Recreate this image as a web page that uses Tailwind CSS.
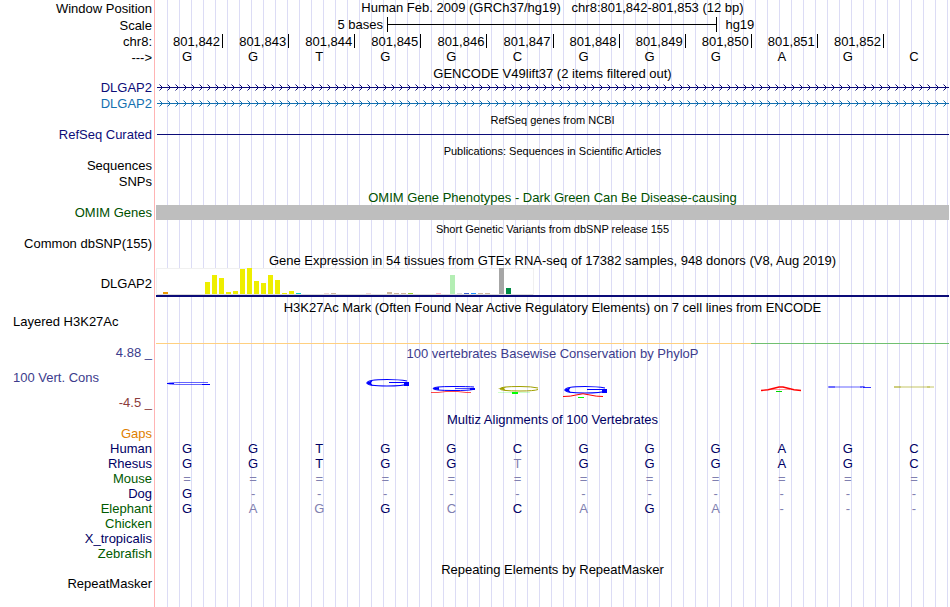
<!DOCTYPE html>
<html lang="en">
<head>
    <meta charset="UTF-8">
    <meta name="viewport" content="width=device-width, initial-scale=1.0">
    <title>Human chr8:801,842-801,853 - Genome Browser</title>
    <script src="https://cdn.jsdelivr.net/npm/@tailwindcss/browser@4"></script>
</head>
<body class="bg-white">
<!-- Page background carries the red divider and the vertical guide lines -->
<main class="min-h-screen pr-px overflow-hidden text-[13px] leading-[18px] text-black font-['Liberation_Sans',Arial,sans-serif] bg-[linear-gradient(90deg,#fff_154px,#ffb4b4_154px,#ffb4b4_155px,#fff_155px,#fff_156px,transparent_156px),repeating-linear-gradient(90deg,#fff_0px,#fff_11px,#dcdcf5_11px,#dcdcf5_12px)]">

    <!-- Position, scale and ruler -->
    <header>
        <div class="grid grid-cols-[156px_1fr] h-[17px]">
            <div class="text-right pr-1">Window Position</div>
            <h1 class="text-center whitespace-pre leading-4">Human Feb. 2009 (GRCh37/hg19)   chr8:801,842-801,853 (12 bp)</h1>
        </div>
        <div class="grid grid-cols-[156px_1fr] h-4">
            <div class="text-right pr-1">Scale</div>
            <div class="flex leading-4">
                <div class="w-[231px] pr-1 text-right">5 bases</div>
                <div class="w-5/12 h-[15px] border-x border-black flex items-center"><div class="w-full h-px bg-black"></div></div>
                <div class="pl-2">hg19</div>
            </div>
        </div>
        <div class="grid grid-cols-[156px_1fr] h-[15px]">
            <div class="text-right pr-1">chr8:</div>
            <div id="ruler" class="grid grid-cols-12 pt-px leading-4"></div>
        </div>
        <div class="grid grid-cols-[156px_1fr] h-[17px]">
            <div class="text-right pr-1 pt-px">---&gt;</div>
            <div id="bases" class="grid grid-cols-12"></div>
        </div>
    </header>

    <!-- GENCODE -->
    <section>
        <h2 class="pl-[156px] h-[14px] text-center">GENCODE V49lift37 (2 items filtered out)</h2>
        <div class="grid grid-cols-[156px_1fr] h-4 text-[#0c0c78]">
            <div class="text-right pr-1">DLGAP2</div>
            <svg class="w-full h-4 pl-px" fill="none" stroke="currentColor">
                <defs>
                    <pattern id="arrows" width="8" height="16" patternUnits="userSpaceOnUse">
                        <path d="M2.5 5.5 L5.5 8.5 L2.5 11.5" />
                    </pattern>
                </defs>
                <rect width="100%" height="16" fill="url(#arrows)" stroke="none" />
                <path d="M0 8.5 H4000" />
            </svg>
        </div>
        <div class="grid grid-cols-[156px_1fr] h-4 text-[#1470b0]">
            <div class="text-right pr-1">DLGAP2</div>
            <svg class="w-full h-4 pl-px" fill="none" stroke="currentColor">
                <defs>
                    <pattern id="arrowsAlt" width="8" height="16" patternUnits="userSpaceOnUse">
                        <path d="M2.5 5.5 L5.5 8.5 L2.5 11.5" />
                    </pattern>
                </defs>
                <rect width="100%" height="16" fill="url(#arrowsAlt)" stroke="none" />
                <path d="M0 8.5 H4000" />
            </svg>
        </div>
    </section>

    <!-- RefSeq -->
    <section>
        <h2 class="pl-[156px] h-[15px] text-center text-[11px]">RefSeq genes from NCBI</h2>
        <div class="grid grid-cols-[156px_1fr] h-4">
            <div class="text-right pr-1 text-[#0c0c78]">RefSeq Curated</div>
            <div class="ml-px mt-2 h-px bg-[#0c0c78]"></div>
        </div>
    </section>

    <!-- Publications -->
    <section>
        <h2 class="pl-[156px] h-[15px] text-center text-[11px]">Publications: Sequences in Scientific Articles</h2>
        <div class="w-[156px] h-4 pr-1 text-right">Sequences</div>
        <div class="w-[156px] h-4 pr-1 text-right">SNPs</div>
    </section>

    <!-- OMIM -->
    <section class="text-[#005000]">
        <h2 class="pl-[156px] h-[15px] text-center">OMIM Gene Phenotypes - Dark Green Can Be Disease-causing</h2>
        <div class="grid grid-cols-[156px_1fr] h-4">
            <div class="text-right pr-1">OMIM Genes</div>
            <div class="mt-px h-[15px] bg-[#bebebe]"></div>
        </div>
    </section>

    <!-- dbSNP -->
    <section>
        <h2 class="pl-[156px] h-[15px] text-center text-[11px]">Short Genetic Variants from dbSNP release 155</h2>
        <div class="w-[156px] h-[17px] pr-1 text-right">Common dbSNP(155)</div>
    </section>

    <!-- GTEx -->
    <section>
        <h2 class="pl-[156px] h-4 text-center">Gene Expression in 54 tissues from GTEx RNA-seq of 17382 samples, 948 donors (V8, Aug 2019)</h2>
        <div class="grid grid-cols-[156px_1fr] h-[31px]">
            <div class="text-right pr-1 pt-[7px]">DLGAP2</div>
            <div>
                <svg id="gtex" class="block w-[378px] h-[27px]" viewBox="0 0 378 27" shape-rendering="crispEdges">
                    <rect x="0.5" y="0.5" width="377" height="26" fill="#fff" stroke="#f0f0f0" />
                    <path d="M1 26.5 H377" stroke="#dcdcdc" />
                </svg>
                <div class="h-0.5 bg-[#0c0c78]"></div>
            </div>
        </div>
    </section>

    <!-- H3K27Ac -->
    <section>
        <h2 class="pl-[156px] h-[14px] text-center">H3K27Ac Mark (Often Found Near Active Regulatory Elements) on 7 cell lines from ENCODE</h2>
        <div class="grid grid-cols-[156px_1fr] h-[31px]">
            <div class="pl-[13px]">Layered H3K27Ac</div>
            <div class="flex items-end">
                <div class="w-3/4 h-px bg-[#ffd080]"></div>
                <div class="w-1/4 h-px bg-[#70c070]"></div>
            </div>
        </div>
    </section>

    <!-- Conservation -->
    <section class="grid grid-cols-[156px_1fr] h-[68px] text-[#3c3c8c]">
        <div>
            <div class="h-[25px] pr-1 text-right">4.88 _</div>
            <div class="h-[25px] pl-[13px]">100 Vert. Cons</div>
            <div class="pr-1 text-right text-[#8c3c3c]">-4.5 _</div>
        </div>
        <div>
            <h2 class="h-[31px] pt-px text-center">100 vertebrates Basewise Conservation by PhyloP</h2>
            <svg class="block w-full h-6" fill="none">
                <!-- y = 0 is the top of the highest stack -->
                <g stroke="#0000ff">
                    <path d="M52 7.5 H26 Q12 7.5 12 8.5 Q12 9.5 26 9.5 H46" stroke-opacity="0.6" />
                    <path d="M11 8.5 H18 M46 9.5 H54" />
                    <path d="M251 6 Q243 4.5 231 4.5 Q211 4.5 211 8 Q211 11 231 11 Q247 11 252 9" stroke-width="1.2" />
                    <path d="M233 7.5 H253" />
                    <path d="M318 12 Q312 11.5 297 11.5 Q277 11.5 277 13.5 Q277 15.5 297 15.5 Q313 15.5 317 14.5" />
                    <path d="M299 13.5 H319" stroke-opacity="0.7" />
                    <path d="M449 13 Q441 11.5 429 11.5 Q409 11.5 409 15 Q409 18 429 18 Q445 18 450 16" stroke-width="1.2" />
                    <path d="M431 14.5 H451" />
                    <path d="M673 11.5 H708 M673 12.5 H706" stroke-opacity="0.3" />
                    <path d="M672 12 H679 M704 12 H709 M707 12.5 H715" stroke-opacity="0.8" />
                </g>
                <g fill="#0000ff">
                    <path d="M210 8 L217 5 L215 8 L217 11 Z M248 8 H253 V11 H248 Z" />
                    <path d="M276 13.5 L283 12 V15 Z M314 13 H319 V15 H314 Z" />
                    <path d="M408 15 L415 12 L413 15 L415 18 Z M446 15 H451 V18 H446 Z" />
                </g>
                <g stroke="#a0a000">
                    <path d="M382 13 Q376 11.5 364 11.5 Q344 11.5 344 13.7 Q344 16 364 16 Q378 16 382 14.5" />
                    <path d="M738 11.5 H774 M738 12.5 H774" stroke-opacity="0.3" />
                    <path d="M738 12 H745 M771 12 H778" stroke-opacity="0.6" />
                </g>
                <path d="M342 13.7 L350 12 L348 13.7 L350 15.5 Z" fill="#a0a000" />
                <g stroke="#ff0000">
                    <path d="M275 17.5 H282 L290 16.5 H302 L310 17.5 H315" stroke-opacity="0.7" />
                    <path d="M407 21.5 Q415 21.5 420 20 Q427 17.5 434 20 Q440 21.5 447 21.5" />
                    <path d="M605 15.5 L612 14.8 L623 12 H627 L638 14.8 L645 15.5" stroke-width="1.4" />
                    <path d="M615 14.5 H634" stroke-opacity="0.4" />
                </g>
                <g fill="#00ff00">
                    <path d="M356 17 H362 V19 H356 Z M422 22 H428 V23 H422 Z" />
                    <path d="M342 17 H374 V18 H342 Z" fill-opacity="0.2" />
                    <path d="M620 16 H626 V17 H620 Z" fill="#00d800" />
                </g>
            </svg>
        </div>
    </section>

    <!-- Multiz alignment -->
    <section class="text-[#000064]">
        <h2 class="pl-[156px] h-[14px] text-center leading-4">Multiz Alignments of 100 Vertebrates</h2>
        <table class="w-full table-fixed border-collapse leading-[15px]">
            <colgroup><col class="w-[156px]"><col span="12"></colgroup>
            <tbody id="alignment"></tbody>
        </table>
    </section>

    <!-- RepeatMasker -->
    <section>
        <h2 class="pl-[156px] h-[14px] text-center">Repeating Elements by RepeatMasker</h2>
        <div class="w-[156px] pr-1 text-right">RepeatMasker</div>
    </section>
</main>

<script>
    const sequence = 'GGTGGCGGGAGC';

    // Ruler: a tick closes every base except the last one
    const ruler = document.getElementById('ruler');
    const bases = document.getElementById('bases');
    sequence.split('').forEach((base, index) => {
        const cell = document.createElement('div');
        cell.className = index > 0 ? 'h-[14px] border-l border-black pr-0.5 text-right' : 'h-[14px] pr-0.5 text-right';
        cell.textContent = index < 11 ? '801,' + (842 + index) : '';
        ruler.appendChild(cell);

        const letter = document.createElement('div');
        letter.className = 'text-center pr-1';
        letter.textContent = base;
        bases.appendChild(letter);
    });

    // Alignment rows; lower case marks a mismatch, drawn in the pale colour
    const species = [
        { name: 'Gaps', color: 'text-[#e08000]', row: '' },
        { name: 'Human', color: 'text-[#000064]', row: 'GGTGGCGGGAGC' },
        { name: 'Rhesus', color: 'text-[#000064]', row: 'GGTGGtGGGAGC' },
        { name: 'Mouse', color: 'text-[#005a00]', row: '============' },
        { name: 'Dog', color: 'text-[#000064]', row: 'G-----------' },
        { name: 'Elephant', color: 'text-[#005a00]', row: 'GagGcCaGa---' },
        { name: 'Chicken', color: 'text-[#005a00]', row: '' },
        { name: 'X_tropicalis', color: 'text-[#000064]', row: '' },
        { name: 'Zebrafish', color: 'text-[#005a00]', row: '' }
    ];
    const alignment = document.getElementById('alignment');
    species.forEach((item) => {
        const tr = document.createElement('tr');
        const th = document.createElement('th');
        th.scope = 'row';
        th.className = `pr-1 text-right font-normal ${item.color}`;
        th.textContent = item.name;
        tr.appendChild(th);
        item.row.padEnd(12, ' ').split('').forEach((base) => {
            const td = document.createElement('td');
            const match = /[A-Z]/.test(base);
            td.className = match ? 'pr-1 text-center text-[#000064]' : 'pr-1 text-center text-[#8080b0]';
            td.textContent = base.toUpperCase();
            tr.appendChild(td);
        });
        alignment.appendChild(tr);
    });

    // GTEx bars: x, height, colour
    const bars = [
        [7, 2, '#ee9a00'], [49, 12, '#eeee00'], [56, 19, '#eeee00'], [63, 16, '#eeee00'],
        [70, 2, '#eeee00'], [77, 3, '#eeee00'], [84, 25, '#eeee00'], [91, 26, '#eeee00'],
        [98, 13, '#eeee00'], [105, 11, '#eeee00'], [112, 19, '#eeee00'], [119, 14, '#eeee00'],
        [126, 1, '#eeee00'], [133, 3, '#eeee00'], [140, 1, '#00cdcd'], [168, 1, '#eed5d2'],
        [175, 1, '#cdb79e'], [210, 1, '#eed5d2'], [231, 2, '#cdb79e'], [238, 1, '#cdb79e'],
        [245, 1, '#cdb79e'], [252, 1, '#9acd32'], [280, 1, '#ffb6c1'], [294, 19, '#b4eeb4'],
        [301, 1, '#d9d9d9'], [308, 1, '#3a5fcd'], [315, 1, '#1e90ff'], [322, 1, '#cdb79e'],
        [329, 1, '#cdb79e'], [343, 26, '#a6a6a6'], [350, 6, '#008b45']
    ];
    const gtex = document.getElementById('gtex');
    bars.forEach(([x, height, color]) => {
        const rect = document.createElementNS('http://www.w3.org/2000/svg', 'rect');
        rect.setAttribute('x', x);
        rect.setAttribute('y', 26 - height);
        rect.setAttribute('width', 5);
        rect.setAttribute('height', height);
        rect.setAttribute('fill', color);
        gtex.appendChild(rect);
    });
</script>
</body>
</html>
